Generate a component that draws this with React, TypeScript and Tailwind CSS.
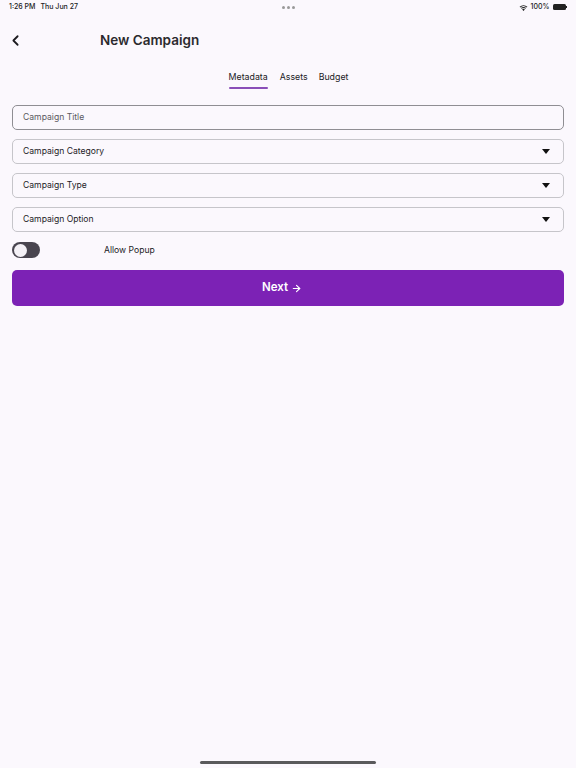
import { ChevronLeft, ArrowRight } from 'lucide-react'

const fields = [
  { label: 'Campaign Title', select: false },
  { label: 'Campaign Category', select: true },
  { label: 'Campaign Type', select: true },
  { label: 'Campaign Option', select: true },
]

function StatusBar() {
  return (
    <div className="h-[14px] flex items-center justify-between px-[9px] text-[7px] font-medium text-[#222]">
      <div className="flex gap-[5px] w-[120px]">
        <span>1:26 PM</span>
        <span>Thu Jun 27</span>
      </div>
      <div className="flex gap-[2px]">
        <span className="w-[3px] h-[3px] rounded-full bg-[#999]" />
        <span className="w-[3px] h-[3px] rounded-full bg-[#999]" />
        <span className="w-[3px] h-[3px] rounded-full bg-[#999]" />
      </div>
      <div className="flex items-center justify-end gap-[3px] w-[120px]">
        <svg width="9" height="7" viewBox="0 0 12 9" fill="#222">
          <path d="M6 9 L4.2 7 A2.6 2.6 0 0 1 7.8 7 Z M2.6 5.3 A5 5 0 0 1 9.4 5.3 L8.5 6.3 A3.7 3.7 0 0 0 3.5 6.3 Z M0.8 3.4 A7.6 7.6 0 0 1 11.2 3.4 L10.3 4.4 A6.3 6.3 0 0 0 1.7 4.4 Z" />
        </svg>
        <span>100%</span>
        <div className="flex items-center">
          <div className="w-[13px] h-[6px] rounded-[1.5px] bg-[#222]" />
          <div className="w-[1px] h-[2px] bg-[#222] ml-[0.5px]" />
        </div>
      </div>
    </div>
  )
}

export default function App() {
  return (
    <div
      className="w-[576px] h-[768px] bg-[#fbf8fd] flex flex-col text-[#1c1b1f] relative"
      style={{ fontFamily: 'Inter, "Noto Sans", sans-serif' }}
    >
      <StatusBar />

      {/* header */}
      <div className="h-[52px] flex items-center">
        <ChevronLeft className="ml-[7px] w-[17px] h-[17px] text-[#1c1b1f]" strokeWidth={2.5} />
        <h1 className="ml-[76px] text-[13.5px] font-semibold text-[#2b2a2e]">New Campaign</h1>
      </div>

      {/* tabs */}
      <div className="flex justify-center h-[24px]">
        <div className="flex text-[8.8px] text-[#1c1b1f]">
          <div className="flex flex-col items-center px-[6px]">
            <span className="h-[21px] flex items-center">Metadata</span>
            <span className="h-[2px] w-full bg-[#8a4fb8] rounded-full" />
          </div>
          <span className="h-[21px] flex items-center px-[6px]">Assets</span>
          <span className="h-[21px] flex items-center px-[5px]">Budget</span>
        </div>
      </div>

      {/* form */}
      <div className="flex flex-col gap-[9px] px-[12px] pt-[15px]">
        {fields.map((f, i) => (
          <div
            key={f.label}
            className={
              'h-[25px] rounded-[5px] border flex items-center justify-between pl-[10px] pr-[13px] text-[8.6px] ' +
              (i === 0 ? 'border-[#8f8e93] text-[#5a5960]' : 'border-[#c6c5ca] text-[#1c1b1f]')
            }
          >
            <span>{f.label}</span>
            {f.select && (
              <svg width="8" height="5" viewBox="0 0 8 5">
                <path d="M0 0 H8 L4 5 Z" fill="#111" />
              </svg>
            )}
          </div>
        ))}

        <div className="flex items-center h-[18px]">
          <div className="w-[28px] h-[16px] rounded-full bg-[#49454f] flex items-center pl-[1.5px]">
            <div className="w-[13px] h-[13px] rounded-full bg-[#f4f1f6]" />
          </div>
          <span className="ml-[64px] text-[8.6px] text-[#1c1b1f]">Allow Popup</span>
        </div>

        <button className="h-[36px] mt-[2px] rounded-[5px] bg-[#7c22b5] text-white flex items-center justify-center gap-[3px] text-[11.5px] font-semibold pr-[12px]">
          Next
          <ArrowRight className="w-[11px] h-[11px]" strokeWidth={2.5} />
        </button>
      </div>

      <div className="absolute bottom-[4px] left-[200px] w-[176px] h-[3px] rounded-full bg-[#5a5a5c]" />
    </div>
  )
}
